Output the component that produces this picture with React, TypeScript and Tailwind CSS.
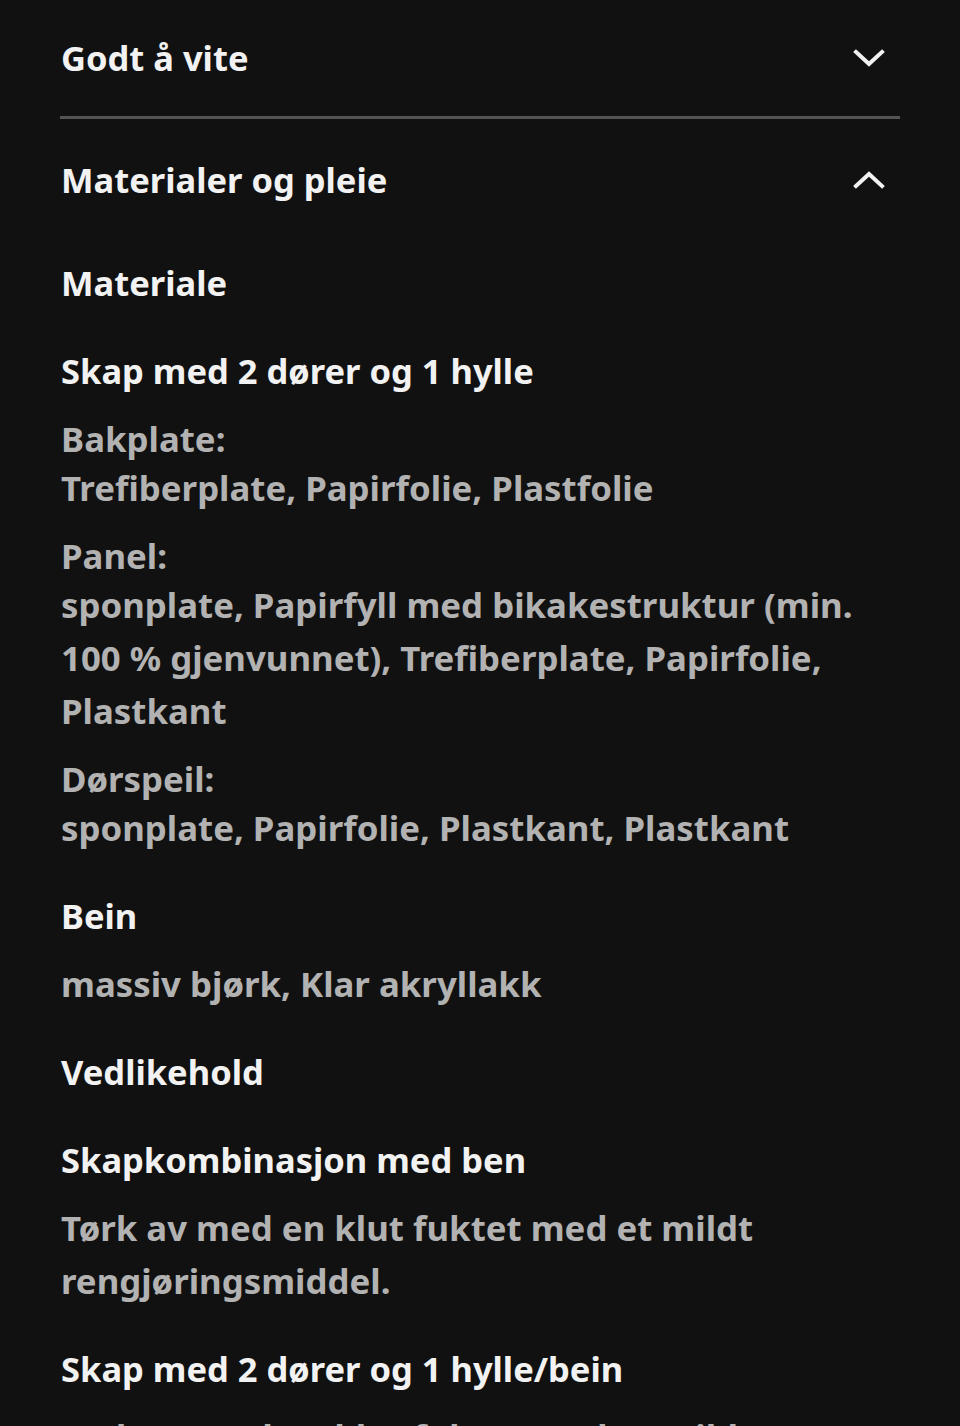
import React, { useState } from 'react';

type Row = { kind: 'heading' | 'label' | 'value'; text: string; gap: number };

const Chevron: React.FC<{ open: boolean }> = ({ open }) => (
    <svg width="32" height="20" viewBox="0 0 32 20" className="shrink-0">
        <polyline
            points={open ? '3,16 16,4 29,16' : '3,4 16,16 29,4'}
            fill="none"
            stroke="#f2f2f2"
            strokeWidth="4"
            strokeLinecap="square"
        />
    </svg>
);

// gap = space above the line box, in px
const materials: Row[] = [
    { kind: 'heading', text: 'Materiale', gap: 0 },
    { kind: 'heading', text: 'Skap med 2 dører og 1 hylle', gap: 36 },
    { kind: 'label', text: 'Bakplate:', gap: 20 },
    { kind: 'value', text: 'Trefiberplate, Papirfolie, Plastfolie', gap: 0 },
    { kind: 'label', text: 'Panel:', gap: 20 },
    { kind: 'value', text: 'sponplate, Papirfyll med bikakestruktur (min. 100 % gjenvunnet), Trefiberplate, Papirfolie, Plastkant', gap: 0 },
    { kind: 'label', text: 'Dørspeil:', gap: 20 },
    { kind: 'value', text: 'sponplate, Papirfolie, Plastkant, Plastkant', gap: 0 },
    { kind: 'heading', text: 'Bein', gap: 36 },
    { kind: 'value', text: 'massiv bjørk, Klar akryllakk', gap: 15 },
    { kind: 'heading', text: 'Vedlikehold', gap: 36 },
    { kind: 'heading', text: 'Skapkombinasjon med ben', gap: 36 },
    { kind: 'value', text: 'Tørk av med en klut fuktet med et mildt rengjøringsmiddel.', gap: 15 },
    { kind: 'heading', text: 'Skap med 2 dører og 1 hylle/bein', gap: 36 },
    { kind: 'value', text: 'Tørk av med en klut fuktet med et mildt rengjøringsmiddel.', gap: 15 },
];

const rowClass: Record<Row['kind'], string> = {
    heading: 'text-[#f2f2f2] leading-[52px]',
    label: 'text-[#b2b2b2] text-[34.8px] leading-[44px]',
    value: 'text-[#b2b2b2] text-[34.8px] leading-[53px]',
};

const App: React.FC = () => {
    const [goodToKnowOpen, setGoodToKnowOpen] = useState(false);
    const [materialsOpen, setMaterialsOpen] = useState(true);

    return (
        <div
            className="h-[1426px] overflow-hidden bg-[#111111] px-[60px] text-[34.5px] font-bold"
            style={{ fontFamily: '"Noto Sans", "Open Sans", sans-serif' }}
        >
            <button
                onClick={() => setGoodToKnowOpen(!goodToKnowOpen)}
                className="flex h-[116px] w-full items-center justify-between pr-[15px] text-left text-[#f2f2f2]"
            >
                <span className="pl-px">Godt å vite</span>
                <Chevron open={goodToKnowOpen} />
            </button>
            <div className="h-[2.5px] w-full bg-[#545454]" />
            <button
                onClick={() => setMaterialsOpen(!materialsOpen)}
                className="flex h-[123px] w-full items-center justify-between pr-[15px] text-left text-[#f2f2f2]"
            >
                <span className="pl-px">Materialer og pleie</span>
                <Chevron open={materialsOpen} />
            </button>

            {materialsOpen && (
                <div className="pt-[15px] pl-px pr-[40px]">
                    {materials.map((row, i) => (
                        <p key={i} className={rowClass[row.kind]} style={{ marginTop: row.gap }}>
                            {row.text}
                        </p>
                    ))}
                </div>
            )}
        </div>
    );
};

export default App;
